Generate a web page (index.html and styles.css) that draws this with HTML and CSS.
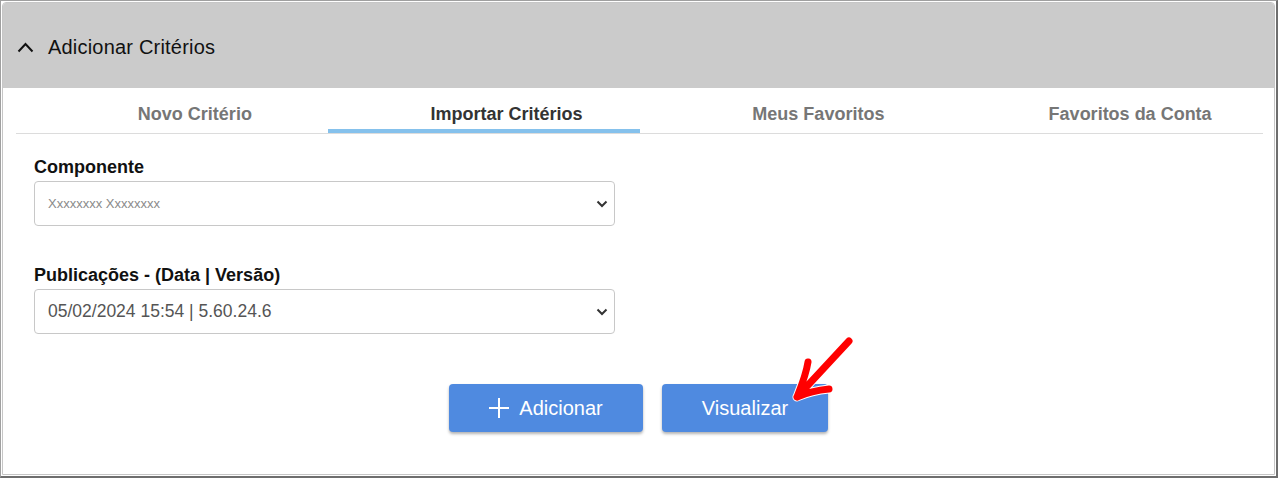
FILE: index.html
```html
<!DOCTYPE html>
<html lang="pt-br">
<head>
  <meta charset="UTF-8">
  <meta name="viewport" content="width=device-width, initial-scale=1.0">
  <title>Adicionar Critérios</title>
  <link rel="stylesheet" href="styles.css">
</head>
<body>
  <div class="panel">
    <!-- Cabeçalho do painel -->
    <div class="panel-header">
      <svg class="collapse-icon" width="17" height="12" viewBox="0 0 17 12">
        <path d="M1.5 10.5 L8.5 3 L15.5 10.5" fill="none" stroke="#111" stroke-width="2"/>
      </svg>
      <span>Adicionar Critérios</span>
    </div>

    <!-- Abas -->
    <div class="tabs">
      <div class="tab">Novo Critério</div>
      <div class="tab active">Importar Critérios</div>
      <div class="tab">Meus Favoritos</div>
      <div class="tab">Favoritos da Conta</div>
    </div>

    <div class="form">
      <div class="field">
        <label>Componente</label>
        <div class="select">
          <span class="placeholder">Xxxxxxxx Xxxxxxxx</span>
          <svg class="select-arrow" width="12" height="8" viewBox="0 0 12 8">
            <path d="M1.5 1.5 L6 6 L10.5 1.5" fill="none" stroke="#333" stroke-width="2"/>
          </svg>
        </div>
      </div>

      <div class="field">
        <label>Publicações - (Data | Versão)</label>
        <div class="select">
          <span class="value">05/02/2024 15:54 | 5.60.24.6</span>
          <svg class="select-arrow" width="12" height="8" viewBox="0 0 12 8">
            <path d="M1.5 1.5 L6 6 L10.5 1.5" fill="none" stroke="#333" stroke-width="2"/>
          </svg>
        </div>
      </div>

      <div class="actions">
        <button class="btn btn-add">
          <svg width="20" height="20" viewBox="0 0 20 20">
            <path d="M10 0 V20 M0 10 H20" stroke="#fff" stroke-width="2"/>
          </svg>
          Adicionar
        </button>
        <button class="btn btn-view">Visualizar</button>
      </div>
    </div>
  </div>

  <!-- Seta vermelha de anotação -->
  <svg class="annotation" width="70" height="70" viewBox="0 0 70 70">
    <g fill="none" stroke-linecap="round" stroke-linejoin="round">
      <path d="M57 4 L5 60 M16 25 C14 38 9 50 5 60 C14 56 26 53 37 52" stroke="#fff" stroke-width="9"/>
      <path d="M57 4 L5 60 M16 25 C14 38 9 50 5 60 C14 56 26 53 37 52" stroke="#f00" stroke-width="7"/>
    </g>
  </svg>
</body>
</html>
```

FILE: styles.css
```css
* {
  margin: 0;
  padding: 0;
  box-sizing: border-box;
}

body {
  width: 1278px;
  height: 478px;
  background-color: #fff;
  font-family: "Liberation Sans", Arial, sans-serif;
  border-top: 1px solid #a0a0a0;
  border-left: 1px solid #a0a0a0;
  border-right: 2px solid #6e6e6e;
  border-bottom: 2px solid #6e6e6e;
  padding: 1px;
  position: relative;
}

.panel {
  height: 100%;
  border: 1px solid #c6c6c6;
  border-radius: 4px 4px 0 0;
  overflow: hidden;
}

/* Cabeçalho */
.panel-header {
  height: 85px;
  background-color: #cbcbcb;
  display: flex;
  align-items: center;
  padding: 3px 0 0 14px;
  font-size: 20px;
  letter-spacing: 0.2px;
  color: #111;
}

.collapse-icon {
  margin-right: 14px;
  margin-top: -1px;
}

/* Abas */
.tabs {
  display: flex;
  margin: 0 11px 0 13px;
  border-bottom: 1px solid #dcdcdc;
}

.tab {
  flex: 1;
  height: 45px;
  padding-top: 16px;
  padding-left: 46px;
  text-align: center;
  font-size: 18px;
  font-weight: bold;
  color: #767676;
  border-bottom: 4px solid transparent;
}

.tab.active {
  color: #333;
  border-bottom-color: #85c1ec;
}

/* Formulário */
.form {
  padding: 23px 0 0 31px;
}

.field + .field {
  margin-top: 39px;
}

.field label {
  display: block;
  font-size: 18px;
  font-weight: bold;
  color: #111;
  margin-bottom: 3px;
}

.select {
  width: 581px;
  height: 45px;
  border: 1px solid #c8c8c8;
  border-radius: 4px;
  display: flex;
  align-items: center;
  justify-content: space-between;
  padding: 0 6px 0 13px;
}

.placeholder {
  font-size: 13px;
  color: #8a8a8a;
}

.value {
  font-size: 17.5px;
  color: #555;
}

/* Botões */
.actions {
  display: flex;
  justify-content: center;
  gap: 19px;
  margin-top: 50px;
  margin-left: -31px;
}

.btn {
  height: 48px;
  background-color: #4f8ae0;
  border: none;
  border-radius: 4px;
  color: #fff;
  font-family: "Liberation Sans", Arial, sans-serif;
  font-size: 20px;
  display: flex;
  align-items: center;
  justify-content: center;
  gap: 10px;
  box-shadow: 0 2px 3px rgba(0, 0, 0, 0.3);
}

.btn-add {
  width: 194px;
}

.btn-view {
  width: 166px;
}

/* Seta de anotação */
.annotation {
  position: absolute;
  left: 791px;
  top: 336px;
}
```
